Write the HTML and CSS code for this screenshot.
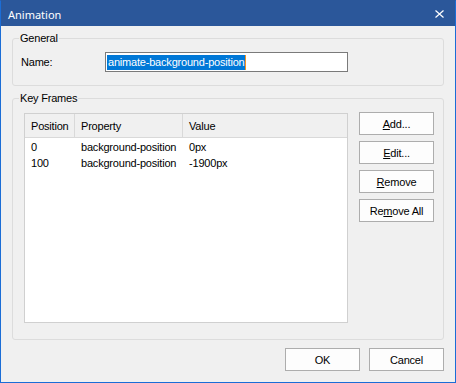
FILE: index.html
```html
<!DOCTYPE html>
<html>
<head>
<meta charset="utf-8">
<title>Animation</title>
<link rel="stylesheet" href="styles.css">
</head>
<body>
<div class="window">
  <div class="titlebar">
    <span class="title">Animation</span>
    <svg class="close" width="9" height="8" viewBox="0 0 9 8"><path d="M0.5 0.5L8.5 7.5M8.5 0.5L0.5 7.5" stroke="#fff" stroke-width="1.2" fill="none"/></svg>
  </div>
  <div class="content">
    <fieldset class="group general">
      <legend>General</legend>
      <div class="field-row">
        <label class="field-label">Name:</label>
        <div class="textbox"><span class="selected">animate-background-position</span><span class="caret"></span></div>
      </div>
    </fieldset>
    <fieldset class="group keyframes">
      <legend>Key Frames</legend>
      <div class="kf-body">
        <div class="listview">
          <div class="lv-header">
            <div class="hcol w1">Position</div>
            <div class="hcol w2">Property</div>
            <div class="hcol w3">Value</div>
          </div>
          <div class="lv-rows">
            <div class="lv-row">
              <div class="cell w1">0</div>
              <div class="cell w2">background-position</div>
              <div class="cell w3">0px</div>
            </div>
            <div class="lv-row">
              <div class="cell w1">100</div>
              <div class="cell w2">background-position</div>
              <div class="cell w3">-1900px</div>
            </div>
          </div>
        </div>
        <div class="side-buttons">
          <button class="btn"><u>A</u>dd...</button>
          <button class="btn"><u>E</u>dit...</button>
          <button class="btn"><u>R</u>emove</button>
          <button class="btn">Re<u>m</u>ove All</button>
        </div>
      </div>
    </fieldset>
    <div class="footer">
      <button class="btn">OK</button>
      <button class="btn">Cancel</button>
    </div>
  </div>
</div>
</body>
</html>
```

FILE: styles.css
```css
html, body {
  margin: 0;
  background: #f0f0f0;
}
body {
  font-family: "Liberation Sans", Arial, sans-serif;
  font-size: 11px;
  letter-spacing: -0.2px;
  color: #000;
}
.window {
  width: 456px;
  height: 383px;
  box-sizing: border-box;
  border: 1px solid #1b6dd6;
  border-top-color: #2b579a;
  background: #f0f0f0;
  display: flex;
  flex-direction: column;
}
.titlebar {
  flex: none;
  height: 25px;
  box-sizing: border-box;
  padding: 1px 11px 0 7px;
  background: #2b579a;
  color: #fff;
  display: flex;
  align-items: center;
  justify-content: space-between;
}
.title {
  font-family: "Noto Sans", sans-serif;
  font-size: 11px;
  letter-spacing: 0;
}
.close {
  display: block;
}
.content {
  padding: 0 11px;
  display: flex;
  flex-direction: column;
}
.group {
  margin: 0;
  padding: 0;
  min-width: 0;
  border: 1px solid #dcdcdc;
  border-radius: 3px;
}
.group legend {
  margin-left: 6px;
  padding: 0 1px;
  line-height: 14px;
}
.general {
  margin-top: 5px;
}
.keyframes {
  margin-top: 5px;
}
.field-row {
  display: flex;
  align-items: center;
  padding: 7px 0 13px 8px;
}
.field-label {
  width: 84px;
}
.textbox {
  width: 243px;
  height: 20px;
  box-sizing: border-box;
  border: 1px solid #7a7a7a;
  background: #fff;
  display: flex;
  align-items: center;
  padding-left: 1px;
}
.selected {
  background: #0078d7;
  color: #fff;
  line-height: 15px;
  padding: 0 1px;
}
.caret {
  width: 1px;
  height: 15px;
  background: #f7931e;
}
.kf-body {
  display: flex;
  align-items: flex-start;
  gap: 11px;
  padding: 8px 9px 16px 11px;
}
.listview {
  flex: none;
  width: 324px;
  height: 210px;
  box-sizing: border-box;
  border: 1px solid #d0d0d0;
  background: #fff;
}
.lv-header {
  display: flex;
  height: 24px;
  box-sizing: border-box;
  background: #f0f0f0;
  border-bottom: 1px solid #d9d9d9;
}
.hcol, .cell {
  box-sizing: border-box;
  padding-left: 6px;
  white-space: nowrap;
}
.hcol {
  display: flex;
  align-items: center;
}
.hcol.w1, .hcol.w2 {
  border-right: 1px solid #d9d9d9;
}
.w1 { width: 50px; }
.w2 { width: 108px; }
.w3 { flex: 1; }
.lv-rows {
  padding-top: 1px;
}
.lv-row {
  display: flex;
  height: 16px;
  line-height: 16px;
}
.side-buttons {
  display: flex;
  flex-direction: column;
  gap: 6px;
  margin-top: -1px;
}
.btn {
  width: 75px;
  height: 23px;
  box-sizing: border-box;
  padding: 0;
  border: 1px solid #adadad;
  background: #fdfdfd;
  color: #000;
  font: inherit;
  letter-spacing: inherit;
}
.footer {
  display: flex;
  justify-content: flex-end;
  gap: 9px;
  margin-top: 8px;
}
```
